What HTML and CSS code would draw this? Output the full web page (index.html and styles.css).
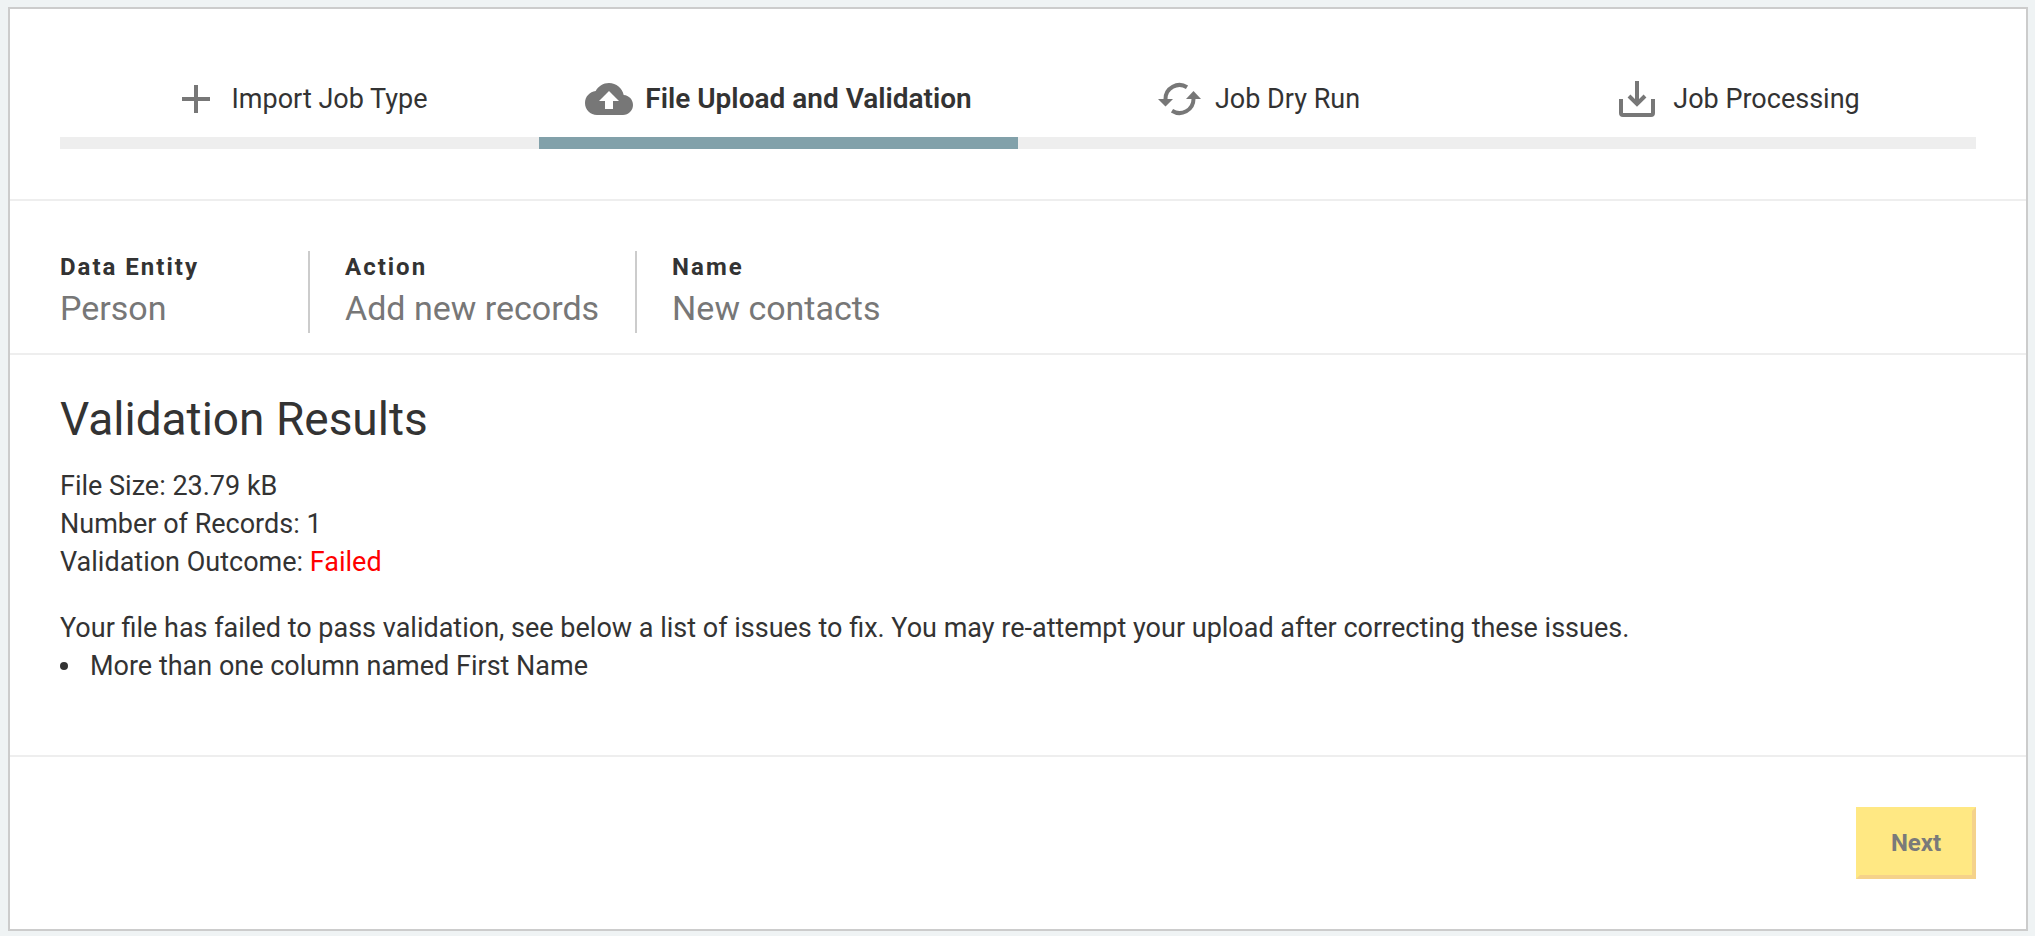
FILE: index.html
```
<!DOCTYPE html>
<html lang="en">
<head>
  <meta charset="UTF-8" />
  <meta name="viewport" content="width=device-width, initial-scale=1" />
  <title>Import Job - File Upload and Validation</title>
  <link rel="stylesheet" href="styles.css">
</head>
<body>
  <main class="card">
    <!-- Wizard steps -->
    <ol class="steps">
      <li class="step">
        <svg class="step-icon" viewBox="0 0 24 24" aria-hidden="true">
          <path d="M19 13h-6v6h-2v-6H5v-2h6V5h2v6h6v2z"/>
        </svg>
        <span>Import Job Type</span>
      </li>
      <li class="step active" aria-current="step">
        <svg class="step-icon" viewBox="0 0 24 24" aria-hidden="true">
          <path d="M19.35 10.04C18.67 6.59 15.64 4 12 4 9.11 4 6.6 5.64 5.35 8.04 2.34 8.36 0 10.91 0 14c0 3.31 2.69 6 6 6h13c2.76 0 5-2.24 5-5 0-2.64-2.05-4.78-4.65-4.96zM14 13v4h-4v-4H7l5-5 5 5h-3z"/>
        </svg>
        <span>File Upload and Validation</span>
      </li>
      <li class="step">
        <svg class="step-icon" viewBox="0 0 48 48" aria-hidden="true">
          <path class="line" d="M10.5 25V24A14 14 0 0 1 32 12.200M38.500 23V24A14 14 0 0 1 17 35.800"/>
          <path d="M3 24H18L10.5 31.500zM31 24H46L38.500 16z"/>
        </svg>
        <span>Job Dry Run</span>
      </li>
      <li class="step">
        <svg class="step-icon" viewBox="0 0 48 48" aria-hidden="true">
          <path class="line" d="M8 24V38Q8 40 10 40H38Q40 40 40 38V24M24 6V30M16 21L24 29L32 21"/>
        </svg>
        <span>Job Processing</span>
      </li>
    </ol>

    <!-- Job summary -->
    <dl class="summary">
      <div class="summary-item">
        <dt>Data Entity</dt>
        <dd>Person</dd>
      </div>
      <div class="summary-item">
        <dt>Action</dt>
        <dd>Add new records</dd>
      </div>
      <div class="summary-item">
        <dt>Name</dt>
        <dd>New contacts</dd>
      </div>
    </dl>

    <!-- Validation results -->
    <section class="results">
      <h1>Validation Results</h1>
      <p>File Size: 23.79 kB</p>
      <p>Number of Records: 1</p>
      <p>Validation Outcome: <span class="failed">Failed</span></p>
      <p class="message">Your file has failed to pass validation, see below a list of issues to fix. You may re-attempt your upload after correcting these issues.</p>
      <ul class="issues">
        <li>More than one column named First Name</li>
      </ul>
    </section>

    <footer class="actions">
      <button type="button" class="btn" disabled>Next</button>
    </footer>
  </main>
</body>
</html>
```
FILE: styles.css
```
* {
  margin: 0;
  padding: 0;
  box-sizing: border-box;
}

body {
  font-family: Roboto, "Liberation Sans", sans-serif;
  font-size: 27px;
  line-height: 38px;
  color: #333;
  background: #eff3f4;
}

.card {
  margin: 7px 7px 5px 8px;
  background: #fff;
  border: 2px solid #ccc;
}

/* Wizard steps */
.steps {
  display: flex;
  list-style: none;
  padding: 50px;
  border-bottom: 2px solid #eee;
}

.step {
  flex: 1;
  display: flex;
  align-items: center;
  justify-content: center;
  gap: 12px;
  padding: 16px 0 14px;
  border-bottom: 12px solid #eee;
}

.step.active {
  font-size: 28px;
  font-weight: 600;
  border-bottom-color: #82a1aa;
}

.step-icon {
  width: 48px;
  height: 48px;
  flex-shrink: 0;
  fill: #777;
}

.step-icon .line {
  fill: none;
  stroke: #777;
  stroke-width: 4;
}

/* Job summary */
.summary {
  display: flex;
  padding: 50px 50px 20px;
  border-bottom: 2px solid #eee;
}

.summary-item {
  padding: 0 36px 0 35px;
  border-right: 2px solid #ccc;
}

.summary-item:first-child {
  min-width: 250px;
  padding-left: 0;
}

.summary-item:last-child {
  border-right: none;
}

.summary dt {
  font-size: 24px;
  font-weight: 700;
  line-height: 32px;
  letter-spacing: 2px;
}

.summary dd {
  font-size: 34px;
  line-height: 50px;
  color: #777;
}

/* Validation results */
.results {
  padding: 34px 50px 70px;
  border-bottom: 2px solid #eee;
}

.results h1 {
  font-size: 46px;
  font-weight: 400;
  line-height: 60px;
  margin-bottom: 18px;
}

.failed {
  color: #f00;
}

.message {
  margin-top: 28px;
}

.issues {
  list-style: none;
}

.issues li {
  display: flex;
  align-items: center;
  gap: 22px;
}

.issues li::before {
  content: '';
  width: 8px;
  height: 8px;
  flex-shrink: 0;
  background: #333;
  border-radius: 50%;
}

/* Footer */
.actions {
  display: flex;
  justify-content: flex-end;
  padding: 50px;
}

.btn {
  min-width: 120px;
  height: 72px;
  font-family: inherit;
  font-size: 24px;
  font-weight: 700;
  color: #7a7a7a;
  background: #ffe883;
  border: 4px solid #ffe883;
  border-right-color: #f5d28a;
  border-bottom-color: #f5d28a;
}
```
